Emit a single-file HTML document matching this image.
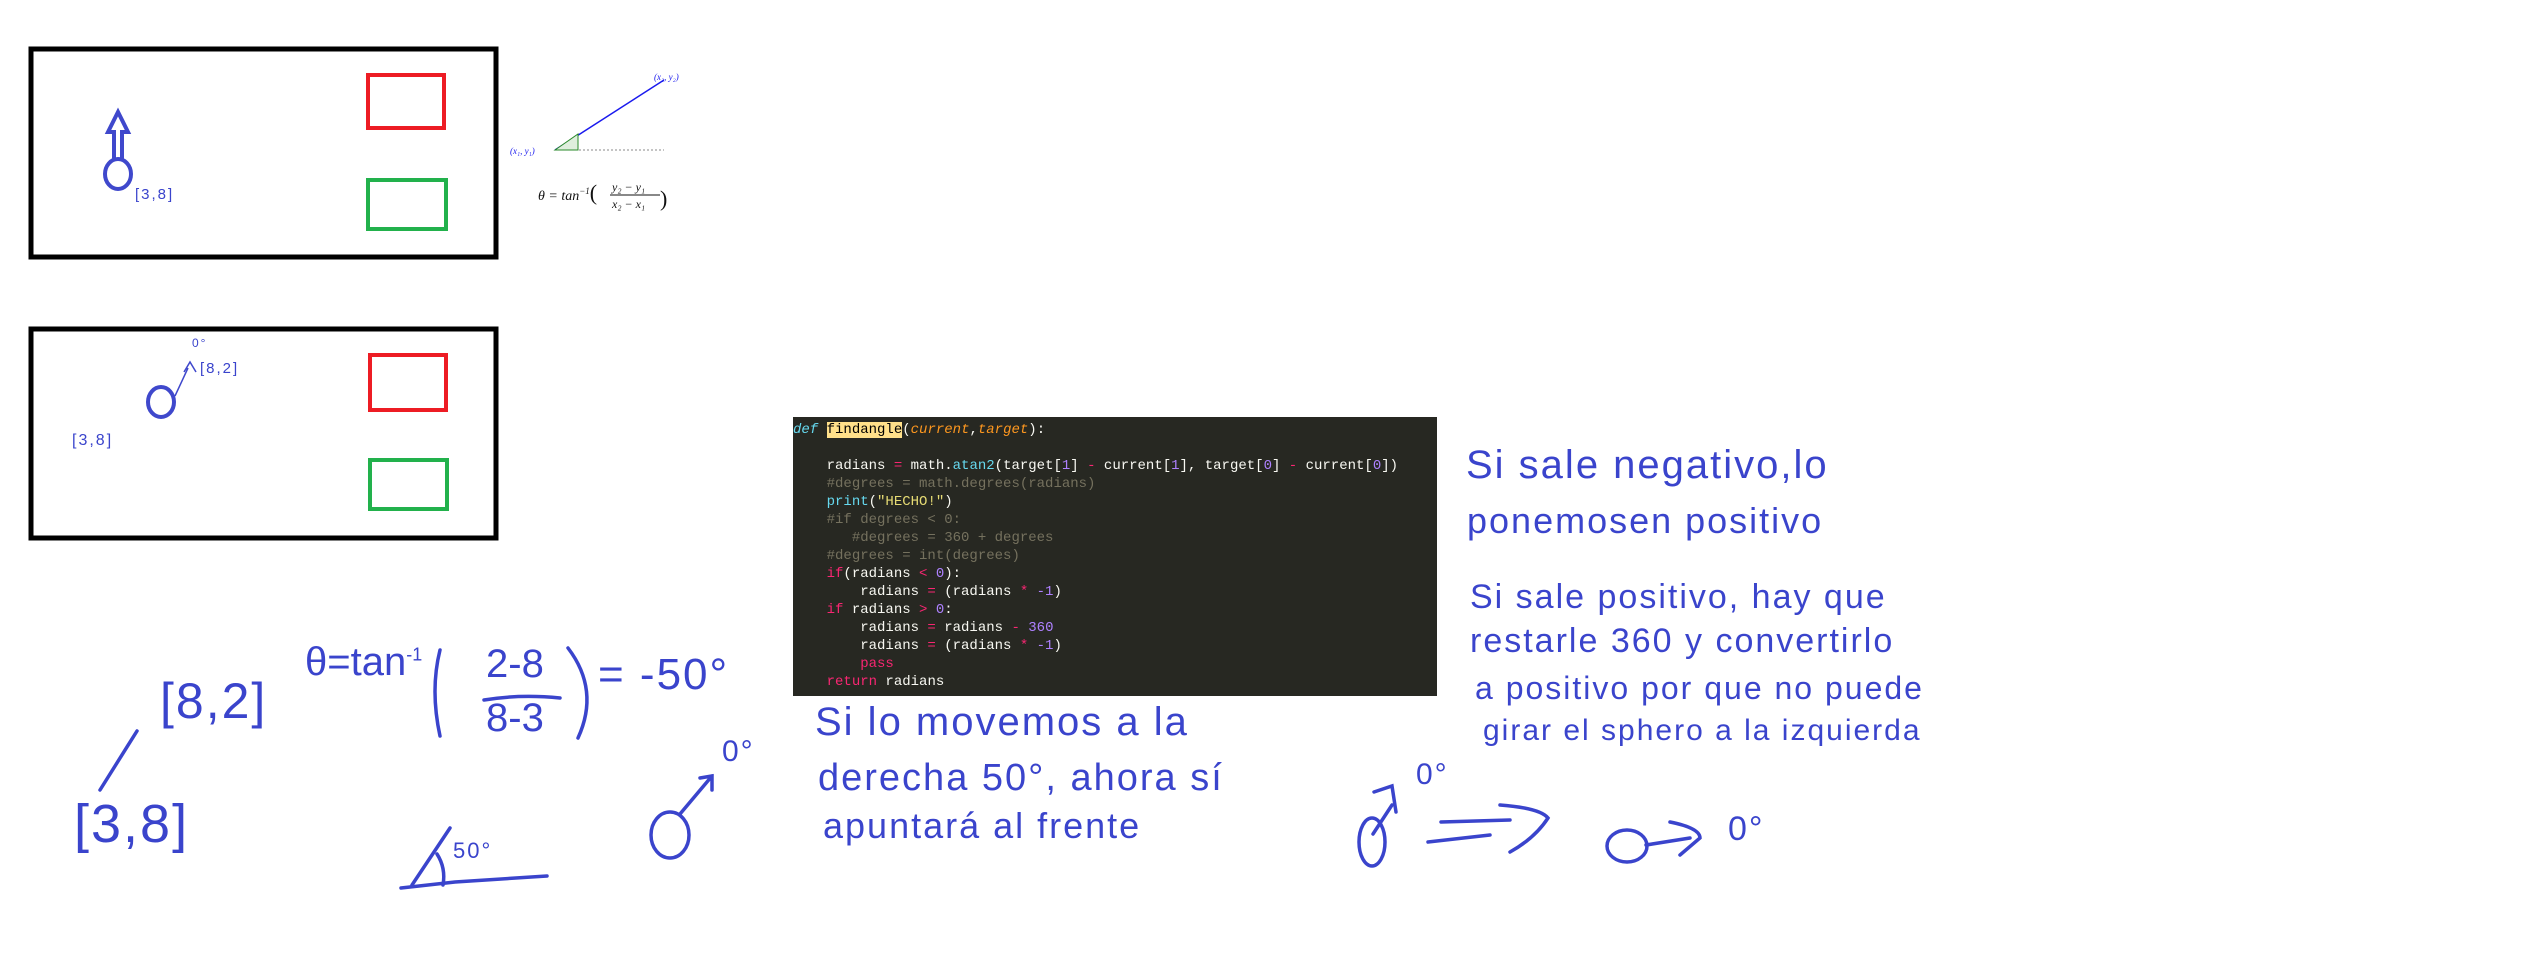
<!DOCTYPE html>
<html><head><meta charset="utf-8"><style>
html,body{margin:0;padding:0;background:#fff;width:2524px;height:976px;overflow:hidden;position:relative;font-family:"Liberation Sans",sans-serif}
.abs{position:absolute}
.code{position:absolute;left:793px;top:417px;width:644px;height:279px;background:#272822;font-family:"Liberation Mono",monospace;font-size:14px;line-height:18px;color:#f8f8f2;white-space:pre;padding-top:4px;box-sizing:border-box}
.c{color:#75715e}.k{color:#f92672}.b{color:#66d9ef}.n{color:#ae81ff}.s{color:#e6db74}.p{color:#fd971f;font-style:italic}.d{color:#66d9ef;font-style:italic}
.hw{position:absolute;color:#3a44cc;font-family:"Liberation Sans",sans-serif;white-space:nowrap;font-weight:300;letter-spacing:2px}
</style></head><body>
<svg class="abs" style="left:0;top:0" width="2524" height="976" viewBox="0 0 2524 976">
<g fill="none">
<rect x="31" y="49" width="465" height="208" stroke="#000" stroke-width="5"/>
<rect x="368" y="75" width="76" height="53" stroke="#ed1c24" stroke-width="4"/>
<rect x="368" y="180" width="78" height="49" stroke="#22b14c" stroke-width="4"/>
<rect x="31" y="329" width="465" height="209" stroke="#000" stroke-width="5"/>
<rect x="370" y="355" width="76" height="55" stroke="#ed1c24" stroke-width="4"/>
<rect x="370" y="460" width="77" height="49" stroke="#22b14c" stroke-width="4"/>
<g stroke="#3f48cc" stroke-width="4">
<ellipse cx="118" cy="174" rx="13" ry="15"/>
<path d="M114 159 V132 H108 L118 112 L128 132 H122 V159"/>
<ellipse cx="161" cy="402" rx="13" ry="15"/>
</g>
<path d="M175 396 L188 368 M184 372 L190 362 L196 372" stroke="#3f48cc" stroke-width="1.5"/>
<line x1="555" y1="150" x2="664" y2="80" stroke="#1a1aee" stroke-width="1.5"/>
<line x1="555" y1="150" x2="664" y2="150" stroke="#888" stroke-width="1" stroke-dasharray="2,2"/>
<path d="M555 150 L578 134 L578 150 Z" fill="#dfeedd" stroke="#2a8a2a"/>
<g stroke="#3a44cc" stroke-width="3.5" stroke-linecap="round">
<path d="M137 731 L100 790"/>
<path d="M440 650 Q430 690 440 736"/>
<path d="M568 648 Q600 690 578 738"/>
<path d="M484 700 Q520 694 560 698"/>
<path d="M401 888 L455 882 L547 876"/>
<path d="M412 885 L450 828"/>
<path d="M437 854 Q446 868 443 885"/>
<ellipse cx="670" cy="835" rx="19" ry="23"/>
<path d="M680 814 L712 776 M700 778 L712 776 L712 790"/>
<ellipse cx="1372" cy="842" rx="13" ry="24"/>
<path d="M1373 834 L1392 805 M1374 792 L1392 786 L1396 812"/>
<path d="M1441 822 L1510 820 M1428 842 L1490 835 M1500 805 Q1540 808 1548 818 Q1535 838 1510 852"/>
<ellipse cx="1627" cy="846" rx="20" ry="16"/>
<path d="M1646 845 L1690 838 M1670 822 Q1700 828 1700 838 L1680 855"/>
</g>
</g>
<g font-family="Liberation Serif,serif" fill="#1a1aee" font-size="9" font-style="italic">
<text x="510" y="154">(x₁, y₁)</text><text x="654" y="80">(x₂, y₂)</text>
</g>
<text x="538" y="200" font-family="Liberation Serif,serif" font-size="14" font-style="italic" fill="#111">θ = tan<tspan font-size="9" dy="-6">−1</tspan><tspan dy="6" font-size="22" font-style="normal">(</tspan></text>
<text x="612" y="191" font-family="Liberation Serif,serif" font-size="12" font-style="italic" fill="#111">y₂ − y₁</text>
<line x1="610" y1="195" x2="660" y2="195" stroke="#111"/>
<text x="612" y="208" font-family="Liberation Serif,serif" font-size="12" font-style="italic" fill="#111">x₂ − x₁</text>
<text x="660" y="206" font-family="Liberation Serif,serif" font-size="22" fill="#111">)</text>
</svg>
<div class="hw" style="left:135px;top:186px;font-size:15px">[3,8]</div>
<div class="hw" style="left:200px;top:360px;font-size:15px">[8,2]</div>
<div class="hw" style="left:192px;top:336px;font-size:12px">0°</div>
<div class="hw" style="left:72px;top:432px;font-size:16px">[3,8]</div>
<div class="code"><span class="d">def</span> <span style="background:#ffe08a;color:#000">findangle</span>(<span class="p">current</span>,<span class="p">target</span>):

    radians <span class="k">=</span> math.<span class="b">atan2</span>(target[<span class="n">1</span>] <span class="k">-</span> current[<span class="n">1</span>], target[<span class="n">0</span>] <span class="k">-</span> current[<span class="n">0</span>])
    <span class="c">#degrees = math.degrees(radians)</span>
    <span class="b">print</span>(<span class="s">"HECHO!"</span>)
    <span class="c">#if degrees &lt; 0:</span>
    <span class="c">   #degrees = 360 + degrees</span>
    <span class="c">#degrees = int(degrees)</span>
    <span class="k">if</span>(radians <span class="k">&lt;</span> <span class="n">0</span>):
        radians <span class="k">=</span> (radians <span class="k">*</span> <span class="n">-1</span>)
    <span class="k">if</span> radians <span class="k">&gt;</span> <span class="n">0</span>:
        radians <span class="k">=</span> radians <span class="k">-</span> <span class="n">360</span>
        radians <span class="k">=</span> (radians <span class="k">*</span> <span class="n">-1</span>)
        <span class="k">pass</span>
    <span class="k">return</span> radians</div>
<div class="hw" style="left:160px;top:672px;font-size:50px">[8,2]</div>
<div class="hw" style="left:305px;top:640px;font-size:40px;letter-spacing:0">θ=tan<sup style="font-size:18px">-1</sup></div>
<div class="hw" style="left:486px;top:642px;font-size:40px;letter-spacing:0">2-8</div>
<div class="hw" style="left:486px;top:696px;font-size:40px;letter-spacing:0">8-3</div>
<div class="hw" style="left:598px;top:650px;font-size:44px">= -50°</div>
<div class="hw" style="left:74px;top:793px;font-size:54px">[3,8]</div>
<div class="hw" style="left:453px;top:838px;font-size:22px">50°</div>
<div class="hw" style="left:722px;top:735px;font-size:30px">0°</div>
<div class="hw" style="left:1416px;top:758px;font-size:30px">0°</div>
<div class="hw" style="left:1728px;top:810px;font-size:34px">0°</div>
<div class="hw" style="left:815px;top:700px;font-size:40px">Si lo movemos a la</div>
<div class="hw" style="left:818px;top:757px;font-size:38px">derecha 50°, ahora sí</div>
<div class="hw" style="left:823px;top:805px;font-size:36px">apuntará al frente</div>
<div class="hw" style="left:1466px;top:443px;font-size:40px">Si sale negativo,lo</div>
<div class="hw" style="left:1467px;top:500px;font-size:36px">ponemosen  positivo</div>
<div class="hw" style="left:1470px;top:578px;font-size:34px">Si sale positivo, hay que</div>
<div class="hw" style="left:1470px;top:622px;font-size:34px">restarle 360 y convertirlo</div>
<div class="hw" style="left:1475px;top:670px;font-size:32px">a positivo por que no puede</div>
<div class="hw" style="left:1483px;top:714px;font-size:30px">girar el sphero a la izquierda</div>
</body></html>
